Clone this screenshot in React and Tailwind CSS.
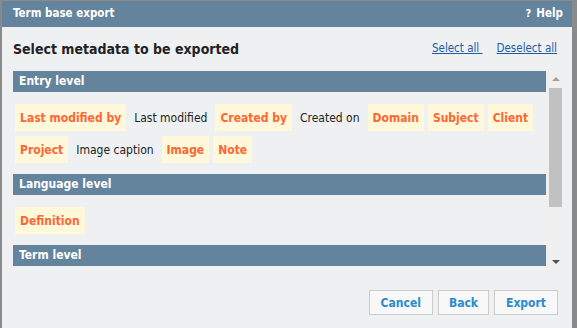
import React from "react";

const entryItems = [
  { label: "Last modified by", on: true },
  { label: "Last modified", on: false },
  { label: "Created by", on: true },
  { label: "Created on", on: false },
  { label: "Domain", on: true },
  { label: "Subject", on: true },
  { label: "Client", on: true },
  { label: "Project", on: true },
  { label: "Image caption", on: false },
  { label: "Image", on: true },
  { label: "Note", on: true },
];

const languageItems = [{ label: "Definition", on: true }];

function SectionBar({ title }) {
  return (
    <div className="h-[21px] bg-[#64839c] text-white font-bold text-[12px] leading-[21px] pl-[6px]">
      {title}
    </div>
  );
}

function Field({ label, on }) {
  return (
    <div
      className={
        on
          ? "h-[27px] px-[5px] flex items-center bg-[#fff8da] text-[#ff6633] font-bold text-[12px]"
          : "h-[27px] px-[4px] flex items-center text-[#222] text-[12px]"
      }
    >
      {label}
    </div>
  );
}

function FieldList({ items }) {
  return (
    <div className="flex flex-wrap gap-x-1 gap-y-[5px] pl-[2px] pt-3 pb-[11px]">
      {items.map((it) => (
        <Field key={it.label} label={it.label} on={it.on} />
      ))}
    </div>
  );
}

export default function App() {
  return (
    <div
      className="w-[577px] h-[328px] bg-[#8a8a8a] overflow-hidden"
      style={{ fontFamily: '"DejaVu Sans Condensed", "DejaVu Sans", sans-serif' }}
    >
      <div className="ml-[2px] mt-[1px] w-[570px] h-[327px] bg-[#eff0f2] flex flex-col">
        {/* Header */}
        <div className="h-[26px] bg-[#64839c] flex items-center justify-between pl-[11px] pr-[9px] text-white font-bold text-[11.5px]">
          <span>Term base export</span>
          <span className="flex items-center gap-[5px]">
            <span className="text-[11px]">?</span>
            <span>Help</span>
          </span>
        </div>

        {/* Title row */}
        <div className="h-[44px] flex items-center justify-between pl-[11px] pr-[15px]">
          <h1 className="text-[14px] font-bold text-[#222]">Select metadata to be exported</h1>
          <div className="flex items-center gap-[14px] text-[11.5px] text-[#1c5ea6]">
            <a href="#" className="underline">Select all&nbsp;</a>
            <a href="#" className="underline">Deselect all</a>
          </div>
        </div>

        {/* Scroll region */}
        <div className="flex h-[197px] pl-[11px]">
          <div className="w-[533px] overflow-hidden">
            <SectionBar title="Entry level" />
            <FieldList items={entryItems} />
            <SectionBar title="Language level" />
            <FieldList items={languageItems} />
            <SectionBar title="Term level" />
          </div>
          <div className="w-[19px] bg-[#f0f0f0] flex flex-col items-center relative">
            <div className="mt-[6px] w-0 h-0 border-l-[4px] border-r-[4px] border-b-[4px] border-l-transparent border-r-transparent border-b-[#a0a0a0]" />
            <div className="mt-[7px] w-[13px] h-[119px] bg-[#c1c1c1]" />
            <div className="absolute bottom-[4px] w-0 h-0 border-l-[4px] border-r-[4px] border-t-[4px] border-l-transparent border-r-transparent border-t-[#505050]" />
          </div>
        </div>

        {/* Footer buttons */}
        <div className="flex justify-end gap-[5px] pr-[14px] mt-[22px]">
          <button className="h-[25px] px-[11px] bg-[#f8f8f8] border border-[#cccccc] text-[#2b8acb] font-bold text-[12px]">
            Cancel
          </button>
          <button className="h-[25px] px-[10px] bg-[#f8f8f8] border border-[#cccccc] text-[#2b8acb] font-bold text-[12px]">
            Back
          </button>
          <button className="h-[25px] px-[11px] bg-[#f8f8f8] border border-[#cccccc] text-[#2b8acb] font-bold text-[12px]">
            Export
          </button>
        </div>
      </div>
    </div>
  );
}
